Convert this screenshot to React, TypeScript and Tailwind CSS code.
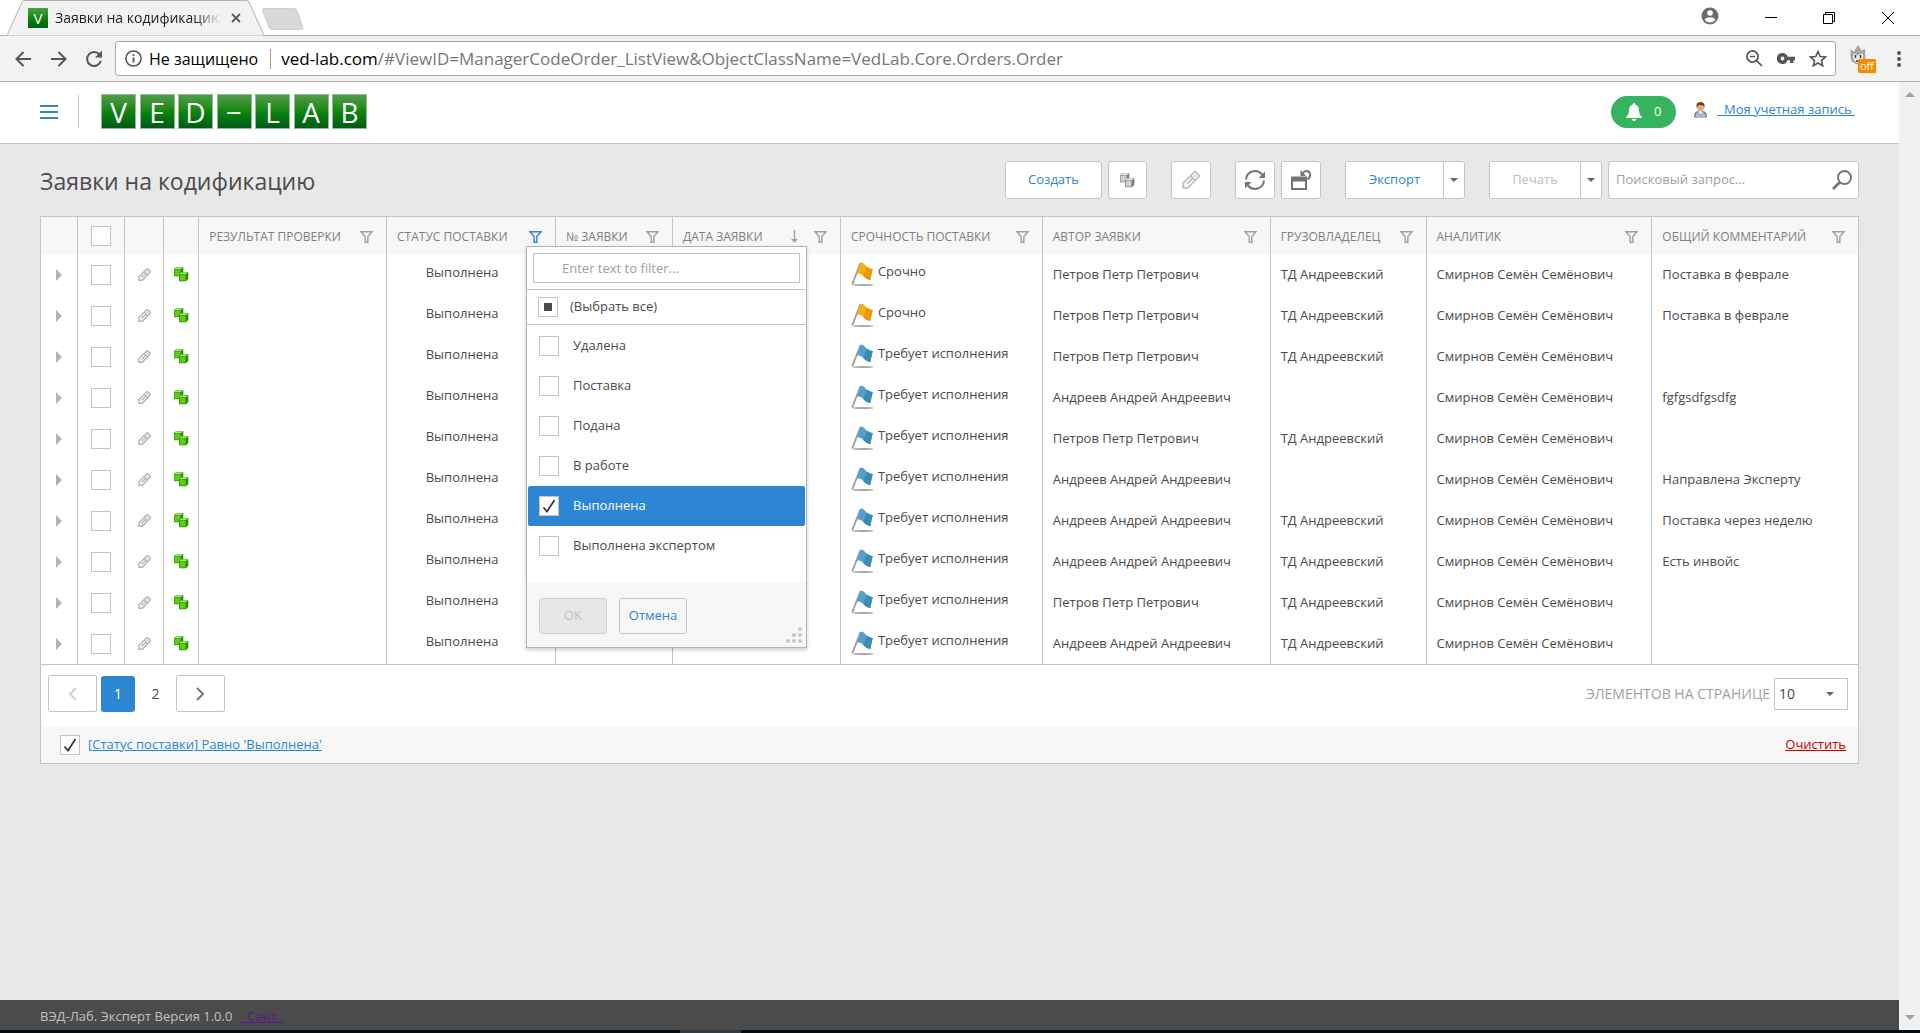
import { FC, ReactNode } from 'react';

type Priority = 'urgent' | 'normal';

interface Order {
  priority: Priority;
  author: string;
  owner: string;
  analyst: string;
  comment: string;
}

const PETROV = 'Петров Петр Петрович';
const ANDREEV = 'Андреев Андрей Андреевич';
const TD = 'ТД Андреевский';
const ANALYST = 'Смирнов Семён Семёнович';

const orders: Order[] = [
  { priority: 'urgent', author: PETROV, owner: TD, analyst: ANALYST, comment: 'Поставка в феврале' },
  { priority: 'urgent', author: PETROV, owner: TD, analyst: ANALYST, comment: 'Поставка в феврале' },
  { priority: 'normal', author: PETROV, owner: TD, analyst: ANALYST, comment: '' },
  { priority: 'normal', author: ANDREEV, owner: '', analyst: ANALYST, comment: 'fgfgsdfgsdfg' },
  { priority: 'normal', author: PETROV, owner: TD, analyst: ANALYST, comment: '' },
  { priority: 'normal', author: ANDREEV, owner: '', analyst: ANALYST, comment: 'Направлена Эксперту' },
  { priority: 'normal', author: ANDREEV, owner: TD, analyst: ANALYST, comment: 'Поставка через неделю' },
  { priority: 'normal', author: ANDREEV, owner: TD, analyst: ANALYST, comment: 'Есть инвойс' },
  { priority: 'normal', author: PETROV, owner: TD, analyst: ANALYST, comment: '' },
  { priority: 'normal', author: ANDREEV, owner: TD, analyst: ANALYST, comment: '' },
];

const filterItems = ['Удалена', 'Поставка', 'Подана', 'В работе', 'Выполнена', 'Выполнена экспертом'];

const CHECK = 'block size-5 shrink-0 appearance-none border border-[#c4c4c4] bg-white';

/* Icons */

const FunnelIcon: FC<{ active?: boolean }> = ({ active = false }) => (
  <svg width="13" height="12" viewBox="0 0 13 12" className={active ? 'text-[#2c86d3]' : 'text-[#a0a0a0]'}>
    <path d="M1 .8h11L7.8 5.6v5.6H5.2V5.6z" fill="none" stroke="currentColor" strokeWidth="1.4" />
  </svg>
);

const PencilIcon: FC<{ size?: number }> = ({ size = 13 }) => (
  <svg width={size} height={size} viewBox="0 0 13 13" fill="none" stroke="currentColor" strokeWidth="1.4">
    <path d="M.9 12.200V8.800L8.700 1q.7-.6 1.400 0L12 2.900q.6.7 0 1.400L4.300 12.200zM6.300 3.600l3.100 3.100M3.500 9.500l3.800-3.800M9 4l.9-.9" />
  </svg>
);

const CubesIcon: FC<{ gray?: boolean }> = ({ gray = false }) => {
  const [front, top, side] = gray ? ['#cfcfcf', '#f0f0f0', '#7c7c7c'] : ['#62cc14', '#a9e87c', '#219400'];
  return (
    <svg width="15" height="15" viewBox="0 0 15 15">
      <path d="M0 2L2 .3h7.300V7L7 9.300H.5L0 8.800z" fill={side} />
      <path d="M.5 2.500h6v6h-6z" fill={front} />
      <path d="M.5 2L2.200.5h6.500L7 2z" fill={top} />
      <path d="M5 7l2-1.800h7.300V12l-2.300 2.200H5.500L5 13.700z" fill={side} />
      <path d="M5.700 7.500h5.800v6H5.700z" fill={front} />
      <path d="M5.500 7l1.700-1.500h6.500L12 7z" fill={top} />
    </svg>
  );
};

const FlagIcon: FC<{ priority: Priority }> = ({ priority }) => {
  const urgent = priority === 'urgent';
  return (
    <svg width="23" height="25" viewBox="0 0 23 25" className="shrink-0">
      <ellipse cx="12" cy="23" rx="10.500" ry="1.100" fill="#a8a8a8" />
      <path d="M1.200 22.500L9.500 1" stroke="#9c9c9c" strokeWidth="1.800" />
      <path
        d="M10 .5c3 0 4 3 6 4.300s3 2 5.700 2.200L19.300 18c-3-.3-5-2-7-4s-3-2.500-6.300-2.500z"
        fill={urgent ? '#f9ae0a' : '#52a0cc'}
      />
      <path
        d="M16 4.800c2 1.300 3 2 5.700 2.200L19.300 18c-3-.3-5-2-7-4z"
        fill={urgent ? '#ea9a08' : '#3c8bb3'}
      />
    </svg>
  );
};

const CaretIcon: FC = () => (
  <svg width="8" height="4" viewBox="0 0 8 4">
    <path d="M0 0h8L4 4z" fill="#666" />
  </svg>
);

const MagnifierIcon: FC = () => (
  <svg width="20" height="20" viewBox="0 0 20 20" fill="none" stroke="#757575">
    <circle cx="12.500" cy="7.500" r="6.500" strokeWidth="2" />
    <path d="M7.800 12.200L1 19" strokeWidth="2.800" />
  </svg>
);

const RefreshIcon: FC = () => (
  <svg width="20" height="20" viewBox="0 0 20 20" fill="none" stroke="#757575" strokeWidth="2">
    <path d="M1 9.500A9 9 0 0 1 17 4.500M19 10.500A9 9 0 0 1 3 15.500" />
    <path d="M20 1.500V8h-6.500zM0 18.500V12h6.500z" fill="#757575" stroke="none" />
  </svg>
);

const ResetViewIcon: FC = () => (
  <svg width="20" height="20" viewBox="0 0 20 20" fill="none" stroke="#757575" strokeWidth="2">
    <path d="M1 8v11h14V8" />
    <path d="M0 6.500h16v5H0z" fill="#757575" stroke="none" />
    <path d="M11.500 3.500q1.500-2.500 4-2.500Q19 1 19 5q0 3-2.500 4.500" />
    <path d="M9.500 0v6H15z" fill="#757575" stroke="none" />
  </svg>
);

const LogoTile: FC<{ letter: string }> = ({ letter }) => (
  <span className="flex h-[35px] w-[35px] items-center justify-center border border-[#8fc08f] bg-linear-to-b from-[#4f9d45] via-[#0b860b] via-50% to-[#005a16] text-[28px] leading-none text-white">
    {letter}
  </span>
);

/* Browser frame */

const BrowserTabs: FC = () => (
  <div className="flex h-9 items-end justify-between border-b border-[#b3b3b3] bg-white">
    <div className="flex items-end">
      <div className="relative -mb-px ml-[7px] h-9 w-[258px]">
        <svg className="absolute inset-0" width="258" height="36" viewBox="0 0 258 36">
          <path d="M0 35.500L15 2q1-1.500 3-1.500h221q2 0 3 1.500l15 33.500" fill="#f2f2f2" stroke="#b3b3b3" />
        </svg>
        <div className="relative flex h-9 items-center pl-[21px]">
          <span className="flex h-5 w-5 items-center justify-center bg-linear-to-b from-[#4f9f45] via-[#0b870b] to-[#00600f] text-[15px] leading-none text-white">
            V
          </span>
          <span className="ml-[7px] w-[166px] overflow-hidden mask-r-from-85% text-[14px] leading-5 whitespace-nowrap text-[#222]">
            Заявки на кодификацию
          </span>
          <button aria-label="Закрыть вкладку" className="ml-2.5">
            <svg width="10" height="10" viewBox="0 0 10 10" stroke="#5a5a5a" strokeWidth="1.800">
              <path d="M1 1l8 8M9 1L1 9" />
            </svg>
          </button>
        </div>
      </div>
      <button aria-label="Новая вкладка" className="-ml-1 mb-[5px]">
        <svg width="43" height="22" viewBox="0 0 43 22">
          <path d="M3 .5h30q2 0 3 2l6 17q.5 2-1.500 2H11q-2 0-3-2l-6.500-17q-.5-2 1.500-2z" fill="#d8d8d8" stroke="#cecece" />
        </svg>
      </button>
    </div>
    <div className="mr-[26px] flex h-full items-center">
      <svg className="mr-[46px] mb-1" width="18" height="18" viewBox="0 0 18 18">
        <circle cx="9" cy="9" r="8.500" fill="#6b6b6b" />
        <circle cx="9" cy="6" r="2.800" fill="#fff" />
        <path d="M3.500 12.500Q5 10.300 9 10.300t5.500 2.200Q12.500 15.500 9 15.500t-5.500-3z" fill="#fff" />
      </svg>
      <svg width="129" height="12" viewBox="0 0 129 12" fill="none" stroke="#000">
        <path d="M0 5.500h12M58.500 2.500h9v9h-9zM60.500 2.500v-2h9v9h-2M117 0l12 12M129 0l-12 12" />
      </svg>
    </div>
  </div>
);

const AddressBar: FC = () => (
  <div className="flex h-[46px] items-center border-b border-[#b3b3b3] bg-[#f2f2f2] pr-[19px] pl-[15px]">
    <div className="flex w-[100px] items-center gap-[18px]">
      <svg width="17" height="16" viewBox="0 0 17 16" fill="none" stroke="#555" strokeWidth="2">
        <path d="M8.500 1L1.500 8l7 7M1.500 8H16" />
      </svg>
      <svg width="17" height="16" viewBox="0 0 17 16" fill="none" stroke="#555" strokeWidth="2">
        <path d="M8.500 1l7 7-7 7M15.500 8H1" />
      </svg>
      <svg width="18" height="18" viewBox="0 0 18 18" fill="none" stroke="#555" strokeWidth="2">
        <path d="M14.800 5A7 7 0 1 0 15.800 11" />
        <path d="M17 .5v7h-7z" fill="#555" stroke="none" />
      </svg>
    </div>
    <div className="flex h-[35px] flex-1 items-center rounded-[3px] border border-[#a9a9a9] bg-white pr-2 pl-[9px] text-[16px]">
      <svg width="17" height="17" viewBox="0 0 17 17" fill="none" stroke="#555" strokeWidth="1.500">
        <circle cx="8.500" cy="8.500" r="7.600" />
        <path d="M8.500 7.500v5M8.500 4.200v1.800" strokeWidth="1.800" />
      </svg>
      <span className="ml-[7px] text-black">Не защищено</span>
      <span className="mr-2.5 ml-3 h-5 w-px bg-[#a0a0a0]" />
      <span className="flex-1 text-[17px] whitespace-nowrap text-[#777]">
        <span className="text-black">ved-lab.com</span>
        /#ViewID=ManagerCodeOrder_ListView&amp;ObjectClassName=VedLab.Core.Orders.Order
      </span>
      <div className="flex items-center gap-3.5">
        <svg width="17" height="17" viewBox="0 0 17 17" fill="none" stroke="#555" strokeWidth="1.700">
          <circle cx="6.500" cy="6.500" r="5.600" />
          <path d="M4 6.500h5M10.500 10.500l5.500 5.500" />
        </svg>
        <svg width="18" height="11" viewBox="0 0 18 11">
          <path fillRule="evenodd" d="M5.500 0a5.500 5.500 0 0 1 5.100 3.700H18v3.600h-1.500V10H13V7.300h-2.400A5.500 5.500 0 1 1 5.500 0zm0 3.600a1.900 1.900 0 1 0 0 3.800 1.900 1.900 0 0 0 0-3.800z" fill="#555" />
        </svg>
        <svg width="18" height="17" viewBox="0 0 18 17" fill="none" stroke="#555" strokeWidth="1.600">
          <path d="M9 1.500l2.200 5 5.300.5-4 3.600 1.200 5.200L9 13l-4.700 2.800 1.200-5.200-4-3.600 5.300-.5z" />
        </svg>
      </div>
    </div>
    <div className="relative mr-[21px] ml-3.5 h-7 w-[26px]">
      <svg width="16" height="20" viewBox="0 0 16 20">
        <path d="M.5 4.500L4 6.500 8 0l3.500 5.500L15 4l.5 9q-.5 6-7 6.500Q1 19 .5 12z" fill="#a5a5a5" />
        <path d="M3 12q0-4 2.500-3L8 10.500 10.500 9q3-1 2.500 3-.5 5-5 6-4-.5-5-6z" fill="#ececec" />
        <path d="M5.500 10v3M10.500 10v3M6 16h4" stroke="#333" strokeWidth="1.500" />
      </svg>
      <span className="absolute right-0 bottom-0 h-3.5 w-[18px] rounded-[1px] bg-[#ff8800] text-center text-[11px] leading-[14px] text-white">
        off
      </span>
    </div>
    <svg width="4" height="16" viewBox="0 0 4 16" fill="#555">
      <circle cx="2" cy="2" r="2" />
      <circle cx="2" cy="8" r="2" />
      <circle cx="2" cy="14" r="2" />
    </svg>
  </div>
);

/* Application */

const AppHeader: FC = () => (
  <header className="flex h-[62px] items-center justify-between border-b border-[#c4c4c4] bg-white pr-11 pb-0.5 pl-10">
    <div className="flex items-center">
      <button aria-label="Меню" className="flex w-[18px] flex-col gap-1">
        <span className="h-0.5 bg-[#2c86d3]" />
        <span className="h-0.5 bg-[#2c86d3]" />
        <span className="h-0.5 bg-[#2c86d3]" />
      </button>
      <span className="mr-[22px] ml-5 h-[33px] w-px bg-[#c4c4c4]" />
      <div className="flex w-[266px] justify-between">
        {['V', 'E', 'D', '−', 'L', 'A', 'B'].map((letter) => (
          <LogoTile key={letter} letter={letter} />
        ))}
      </div>
    </div>
    <div className="flex items-center">
      <button className="flex h-8 w-[65px] items-center justify-center gap-3 rounded-full bg-[#35b35f] text-[13px] text-white">
        <svg width="16" height="18" viewBox="0 0 16 18" fill="#fff">
          <path d="M8 0q1.200 0 1.200 1.500Q13 2.500 13 7q0 5 3 7v1H0v-1q3-2 3-7 0-4.500 3.800-5.500Q6.800 0 8 0zM5.500 16h5q-.8 2-2.500 2t-2.500-2z" />
        </svg>
        0
      </button>
      <div className="flex items-center pb-1">
        <svg className="ml-[18px]" width="13" height="16" viewBox="0 0 13 16">
          <path d="M0 15.500q-.3-6 4-6.500h5q4.300.5 4 6.500z" fill="#6f83a3" />
          <path d="M1.500 15q0-4.500 3-5l2 4 2-4q3 .5 3 5z" fill="#a9bad2" />
          <path d="M4.500 9l2 4 2-4z" fill="#fff" />
          <ellipse cx="6.500" cy="5" rx="3.500" ry="4.500" fill="#e2ab80" />
          <path d="M2.500 6Q1.500 0 6.500 0t4 6Q10 3 6 3 3.500 3 2.500 6z" fill="#7a3d1c" />
        </svg>
        <a href="#account" className="ml-2.5 whitespace-pre text-[13px] text-[#2c86d3] underline">
          {'  Моя учетная запись '}
        </a>
      </div>
    </div>
  </header>
);

const TOOL = 'flex h-[38px] items-center justify-center rounded-[3px] border border-[#c4c4c4] bg-white';

const Toolbar: FC = () => (
  <div className="flex items-center justify-between">
    <h1 className="pt-0.5 text-[23px] leading-8 text-[#4b4b4b]">Заявки на кодификацию</h1>
    <div className="flex items-center text-[13px]">
      <button className={`${TOOL} w-[97px] text-[#2c86d3]`}>Создать</button>
      <button aria-label="Клонировать" className={`${TOOL} ml-1.5 w-[39px]`}>
        <CubesIcon gray />
      </button>
      <button aria-label="Изменить" className={`${TOOL} ml-6 w-10 text-[#c0c0c0]`}>
        <PencilIcon size={18} />
      </button>
      <button aria-label="Обновить" className={`${TOOL} ml-6 w-10`}>
        <RefreshIcon />
      </button>
      <button aria-label="Сбросить вид" className={`${TOOL} ml-1.5 w-10`}>
        <ResetViewIcon />
      </button>
      <div className={`${TOOL} ml-6 w-[120px]`}>
        <button className="flex-1 text-[#2c86d3]">Экспорт</button>
        <button aria-label="Форматы экспорта" className="flex h-full w-[21px] items-center justify-center border-l border-[#c4c4c4]">
          <CaretIcon />
        </button>
      </div>
      <div className={`${TOOL} ml-6 w-[113px]`}>
        <button disabled className="flex-1 text-[#c0c0c0]">Печать</button>
        <button aria-label="Варианты печати" className="flex h-full w-[21px] items-center justify-center border-l border-[#c4c4c4]">
          <CaretIcon />
        </button>
      </div>
      <label className={`${TOOL} ml-1.5 w-[251px] pr-1.5 pl-[7px]`}>
        <input
          type="text"
          aria-label="Поиск"
          placeholder="Поисковый запрос..."
          className="min-w-0 flex-1 outline-none placeholder:text-[#a0a0a0]"
        />
        <MagnifierIcon />
      </label>
    </div>
  </div>
);

const HeaderCell: FC<{ title: string; active?: boolean; sorted?: boolean; children?: ReactNode }> = ({
  title,
  active = false,
  sorted = false,
  children,
}) => (
  <th className="relative border-l border-[#c4c4c4] px-2.5 pt-0.5 text-left font-normal">
    <div className="flex items-center">
      <span className="flex-1 whitespace-nowrap">{title}</span>
      {sorted && (
        <svg className="mr-4" width="7" height="13" viewBox="0 0 7 13">
          <path d="M3.500 0v10" stroke="#a0a0a0" strokeWidth="1.400" />
          <path d="M0 9h7l-3.500 4z" fill="#a0a0a0" />
        </svg>
      )}
      <button aria-label={`Фильтр: ${title}`} className="mr-[3px]">
        <FunnelIcon active={active} />
      </button>
    </div>
    {children}
  </th>
);

const CheckMark: FC = () => (
  <svg className="pointer-events-none absolute inset-0" width="20" height="20" viewBox="0 0 20 20">
    <path d="M4.500 11.500l3.500 4L15.500 4" fill="none" stroke="#333" strokeWidth="1.700" />
  </svg>
);

const FilterPopup: FC = () => (
  <div className="absolute top-[29px] right-[-252px] z-10 w-[281px] border border-[#b3b3b3] bg-white text-[13px] text-[#4b4b4b] shadow-[0_2px_4px_rgba(0,0,0,0.2)]">
    <div className="border-b border-[#c4c4c4] p-1.5">
      <input
        type="text"
        aria-label="Текст фильтра"
        placeholder="Enter text to filter..."
        className="block h-[30px] w-full border border-[#c4c4c4] pl-7 outline-none placeholder:text-[#a0a0a0]"
      />
    </div>
    <label className="flex h-[35px] items-center gap-3 border-b border-[#c4c4c4] px-[11px]">
      <span className="relative">
        <input type="checkbox" className={CHECK} />
        <span className="absolute inset-1.5 bg-[#4b4b4b]" />
      </span>
      (Выбрать все)
    </label>
    <div className="h-[257px] px-px pt-px">
      {filterItems.map((item) => {
        const selected = item === 'Выполнена';
        return (
          <label
            key={item}
            className={`flex h-10 items-center gap-3.5 rounded-[2px] px-[11px] ${selected ? 'bg-[#2c86d3] text-white' : ''}`}
          >
            <span className="relative">
              <input type="checkbox" defaultChecked={selected} className={CHECK} />
              {selected && <CheckMark />}
            </span>
            {item}
          </label>
        );
      })}
    </div>
    <div className="relative flex h-[65px] gap-3 bg-[#f7f7f7] px-3 pt-4">
      <button disabled className="h-9 w-[68px] rounded-[3px] border border-[#d0d0d0] bg-[#e7e7e7] text-[#c0c0c0]">
        OK
      </button>
      <button className="h-9 w-[68px] rounded-[3px] border border-[#c4c4c4] text-[#2c86d3]">Отмена</button>
      <svg className="absolute right-1 bottom-1" width="16" height="16" viewBox="0 0 16 16" fill="#c8c8c8">
        <circle cx="14" cy="2" r="2" />
        <circle cx="8" cy="8" r="2" />
        <circle cx="14" cy="8" r="2" />
        <circle cx="2" cy="14" r="2" />
        <circle cx="8" cy="14" r="2" />
        <circle cx="14" cy="14" r="2" />
      </svg>
    </div>
  </div>
);

const CELL = 'border-l border-[#c4c4c4]';

const OrdersTable: FC = () => (
  <table className="w-full table-fixed border-collapse text-[13px] text-[#4b4b4b]">
    <colgroup>
      <col className="w-[2.03%]" />
      <col className="w-[2.58%]" />
      <col className="w-[2.14%]" />
      <col className="w-[1.93%]" />
      <col className="w-[10.34%]" />
      <col className="w-[9.3%]" />
      <col className="w-[6.44%]" />
      <col className="w-[9.24%]" />
      <col className="w-[11.11%]" />
      <col className="w-[12.54%]" />
      <col className="w-[8.58%]" />
      <col className="w-[12.43%]" />
      <col />
    </colgroup>
    <thead>
      <tr className="h-[37px] bg-[#f7f7f7] text-[12px] text-[#808080]">
        <th />
        <th className={CELL}>
          <input type="checkbox" aria-label="Выбрать все заявки" className={`${CHECK} mx-auto`} />
        </th>
        <th className={CELL} />
        <th className={CELL} />
        <HeaderCell title="РЕЗУЛЬТАТ ПРОВЕРКИ" />
        <HeaderCell title="СТАТУС ПОСТАВКИ" active>
          <FilterPopup />
        </HeaderCell>
        <HeaderCell title="№ ЗАЯВКИ" />
        <HeaderCell title="ДАТА ЗАЯВКИ" sorted />
        <HeaderCell title="СРОЧНОСТЬ ПОСТАВКИ" />
        <HeaderCell title="АВТОР ЗАЯВКИ" />
        <HeaderCell title="ГРУЗОВЛАДЕЛЕЦ" />
        <HeaderCell title="АНАЛИТИК" />
        <HeaderCell title="ОБЩИЙ КОММЕНТАРИЙ" />
      </tr>
    </thead>
    <tbody>
      {orders.map((order, index) => (
        <tr key={index} className="h-[41px] whitespace-nowrap">
          <td>
            <button aria-label="Развернуть" className="mx-auto block">
              <svg width="6" height="12" viewBox="0 0 6 12">
                <path d="M0 0l6 6-6 6z" fill="#b3b3b3" />
              </svg>
            </button>
          </td>
          <td className={CELL}>
            <input type="checkbox" aria-label="Выбрать заявку" className={`${CHECK} mx-auto`} />
          </td>
          <td className={CELL}>
            <button aria-label="Изменить" className="mx-auto block text-[#b3b3b3]">
              <PencilIcon />
            </button>
          </td>
          <td className={CELL}>
            <button aria-label="Открыть заявку" className="mx-auto block">
              <CubesIcon />
            </button>
          </td>
          <td className={CELL} />
          <td className={`${CELL} pr-[18px] pb-1 text-center`}>Выполнена</td>
          <td className={CELL} />
          <td className={CELL} />
          <td className={`${CELL} pl-2.5`}>
            <div className="flex items-start gap-1">
              <FlagIcon priority={order.priority} />
              {order.priority === 'urgent' ? 'Срочно' : 'Требует исполнения'}
            </div>
          </td>
          <td className={`${CELL} pl-2.5`}>{order.author}</td>
          <td className={`${CELL} pl-2.5`}>{order.owner}</td>
          <td className={`${CELL} pl-2.5`}>{order.analyst}</td>
          <td className={`${CELL} pl-2.5`}>{order.comment}</td>
        </tr>
      ))}
    </tbody>
  </table>
);

const Pager: FC = () => (
  <div className="flex h-[62px] items-center justify-between border-t border-[#c4c4c4] pr-2.5 pb-1 pl-[7px] text-[14px] text-[#4b4b4b]">
    <div className="flex items-center">
      <button disabled aria-label="Назад" className="flex h-[37px] w-[49px] items-center justify-center rounded-[2px] border border-[#c4c4c4]">
        <svg width="9" height="14" viewBox="0 0 9 14" fill="none" stroke="#d0d0d0" strokeWidth="2">
          <path d="M8 1L2 7l6 6" />
        </svg>
      </button>
      <button className="ml-1 h-9 w-[34px] rounded-[3px] bg-[#2c86d3] text-white">1</button>
      <button className="ml-1 h-9 w-[33px]">2</button>
      <button aria-label="Вперёд" className="ml-1 flex h-[37px] w-[49px] items-center justify-center rounded-[2px] border border-[#c4c4c4]">
        <svg width="9" height="14" viewBox="0 0 9 14" fill="none" stroke="#777" strokeWidth="2">
          <path d="M1 1l6 6-6 6" />
        </svg>
      </button>
    </div>
    <div className="flex items-center gap-1">
      <label htmlFor="page-size" className="text-[#a0a0a0]">ЭЛЕМЕНТОВ НА СТРАНИЦЕ</label>
      <div className="relative">
        <select id="page-size" className="block h-8 w-[74px] appearance-none border border-[#c4c4c4] bg-white pl-1">
          <option>10</option>
          <option>20</option>
        </select>
        <span className="pointer-events-none absolute inset-y-0 right-3.5 flex items-center">
          <CaretIcon />
        </span>
      </div>
    </div>
  </div>
);

const FilterBar: FC = () => (
  <div className="flex h-[37px] items-center justify-between bg-[#f7f7f7] pr-3 pl-[19px] text-[13px]">
    <div className="flex items-center gap-2">
      <span className="relative">
        <input type="checkbox" defaultChecked aria-label="Применить фильтр" className={CHECK} />
        <CheckMark />
      </span>
      <a href="#filter" className="text-[#2c86d3] underline">[Статус поставки] Равно 'Выполнена'</a>
    </div>
    <a href="#clear" className="text-[#c00] underline">Очистить</a>
  </div>
);

const Scrollbar: FC = () => (
  <div className="flex w-[21px] shrink-0 flex-col items-center justify-between bg-[#f1f1f1] py-2.5">
    <svg width="10" height="5" viewBox="0 0 10 5">
      <path d="M0 5l5-5 5 5z" fill="#a3a3a3" />
    </svg>
    <svg width="10" height="5" viewBox="0 0 10 5">
      <path d="M0 0l5 5 5-5z" fill="#a3a3a3" />
    </svg>
  </div>
);

export default function App() {
  return (
    <div className="flex h-screen flex-col overflow-hidden bg-white font-['Open_Sans',sans-serif]">
      <BrowserTabs />
      <AddressBar />
      <div className="flex min-h-0 flex-1">
        <div className="flex min-w-0 flex-1 flex-col bg-[#e8e8e8]">
          <AppHeader />
          <main className="flex-1 px-10 pt-[17px]">
            <Toolbar />
            <section className="mt-[17px] border border-[#c4c4c4] bg-white">
              <OrdersTable />
              <Pager />
              <FilterBar />
            </section>
          </main>
          <footer className="flex h-[30px] items-center bg-[#4b4b4b] pt-1 pl-10 text-[13px] text-[#c0c0c0]">
            ВЭД-Лаб. Эксперт Версия 1.0.0
            <a href="#site" className="ml-2 whitespace-pre text-[#551a8b] underline">
              {'  Сайт  '}
            </a>
          </footer>
        </div>
        <Scrollbar />
      </div>
      <div className="flex h-[3px] bg-[#060b0f]">
        <span className="ml-[680px] w-[61px] bg-[#343b40]" />
      </div>
    </div>
  );
}
